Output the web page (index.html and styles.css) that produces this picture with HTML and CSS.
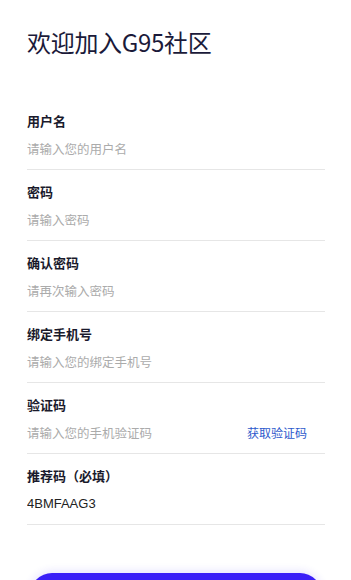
FILE: index.html
```html
<!DOCTYPE html>
<html lang="zh-CN">
<head>
<meta charset="utf-8">
<title>欢迎加入G95社区</title>
<link rel="stylesheet" href="styles.css">
</head>
<body>
<main class="page">
  <h1 class="title">欢迎加入G95社区</h1>
  <form class="form">
    <div class="field">
      <label class="label">用户名</label>
      <div class="row"><input class="input" type="text" placeholder="请输入您的用户名"></div>
    </div>
    <div class="field">
      <label class="label">密码</label>
      <div class="row"><input class="input" type="password" placeholder="请输入密码"></div>
    </div>
    <div class="field">
      <label class="label">确认密码</label>
      <div class="row"><input class="input" type="password" placeholder="请再次输入密码"></div>
    </div>
    <div class="field">
      <label class="label">绑定手机号</label>
      <div class="row"><input class="input" type="text" placeholder="请输入您的绑定手机号"></div>
    </div>
    <div class="field">
      <label class="label">验证码</label>
      <div class="row"><input class="input" type="text" placeholder="请输入您的手机验证码"><span class="code-link">获取验证码</span></div>
    </div>
    <div class="field">
      <label class="label">推荐码（必填）</label>
      <div class="row"><input class="input filled" type="text" value="4BMFAAG3"></div>
    </div>
    <button class="submit" type="button" aria-label="注册"></button>
  </form>
</main>
</body>
</html>
```

FILE: styles.css
```css
html, body {
  margin: 0;
  padding: 0;
  background: #ffffff;
}
body {
  font-family: "Noto Sans CJK SC", "Liberation Sans", sans-serif;
  color: #1b1a36;
}
.page {
  padding: 26px 26px 40px 27px;
}
.title {
  margin: 0;
  font-size: 24px;
  line-height: 32px;
  font-weight: 400;
  color: #1b1a3a;
  letter-spacing: -0.3px;
}
.form {
  margin-top: 41px;
  display: flex;
  flex-direction: column;
}
.field {
  display: flex;
  flex-direction: column;
  gap: 10px;
  padding: 13px 0 11px;
  border-bottom: 1px solid #e6e6e6;
}
.label {
  font-size: 13px;
  line-height: 18px;
  font-weight: 700;
  color: #1a1a2c;
}
.row {
  display: flex;
  align-items: center;
  height: 18px;
  padding-right: 18px;
}
.input {
  flex: 1;
  min-width: 0;
  border: 0;
  outline: 0;
  padding: 0;
  margin: 0;
  background: transparent;
  font-family: "Noto Sans CJK SC", "Liberation Sans", sans-serif;
  font-size: 12.5px;
  line-height: 18px;
  height: 18px;
  color: #222;
}
.input::placeholder {
  color: #ababab;
}
.input.filled {
  font-family: "Liberation Sans", "Noto Sans CJK SC", sans-serif;
  font-size: 13px;
  color: #222;
}
.code-link {
  font-size: 12px;
  line-height: 18px;
  color: #2d59cc;
  white-space: nowrap;
}
.submit {
  margin: 48px 3px 0 3px;
  height: 44px;
  border: 0;
  border-radius: 22px;
  background: #3a1ff7;
  box-shadow: 0 -2px 8px rgba(58, 31, 247, 0.12);
}
```
